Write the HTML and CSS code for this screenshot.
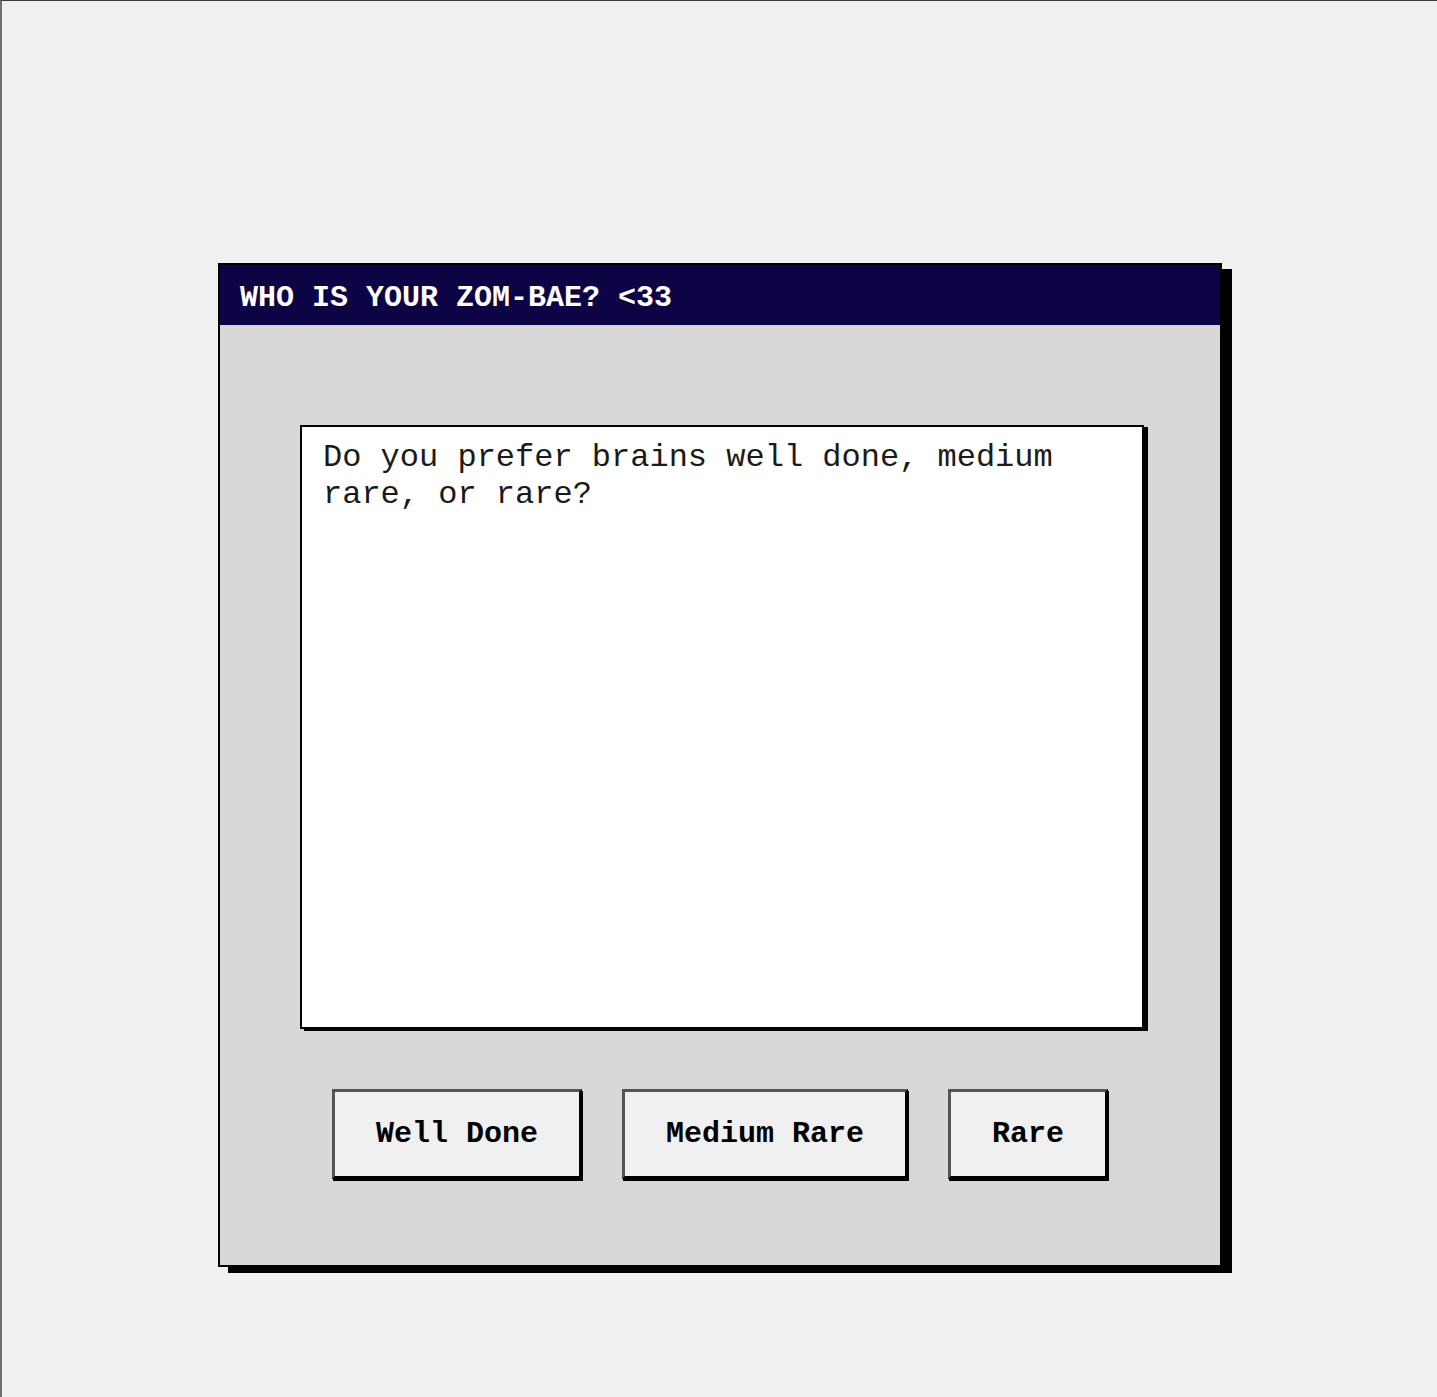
FILE: index.html
```html
<!DOCTYPE html>
<html>
<head>
<meta charset="utf-8">
<title>Zom-Bae</title>
<link rel="stylesheet" href="styles.css">
</head>
<body>
<div class="page">
  <div class="window">
    <div class="titlebar">WHO IS YOUR ZOM-BAE? &lt;33</div>
    <div class="content">
      <div class="textbox">Do you prefer brains well done, medium rare, or rare?</div>
      <div class="buttons">
        <button class="btn">Well Done</button>
        <button class="btn">Medium Rare</button>
        <button class="btn">Rare</button>
      </div>
    </div>
  </div>
</div>
</body>
</html>
```

FILE: styles.css
```css
html, body {
  margin: 0;
  padding: 0;
  background: #f0f0f0;
}
.page {
  box-sizing: border-box;
  min-height: 100vh;
  border-top: 1px solid #3c3c3c;
  border-left: 2px solid #6f6f6f;
  padding-top: 262px;
  display: flex;
  flex-direction: column;
  align-items: center;
  font-family: "Courier New", "Liberation Mono", monospace;
}
.window {
  width: 1000px;
  border: 2px solid #000;
  background: #d9d7d8;
  box-shadow: 10px 6px 0 #000;
  margin-left: 1px;
}
.titlebar {
  height: 60px;
  line-height: 66px;
  background: #0c0444;
  color: #fff;
  font-weight: bold;
  font-size: 30px;
  padding-left: 20px;
  overflow: hidden;
}
.content {
  padding: 100px 0 86px 0;
}
.textbox {
  box-sizing: border-box;
  margin-left: 80px;
  width: 844px;
  height: 604px;
  background: #fff;
  border: 2px solid #000;
  box-shadow: 4px 2px 0 #000;
  padding: 12px 21px;
  font-size: 32px;
  color: #1a1a1a;
}
.buttons {
  margin-top: 60px;
  display: flex;
  justify-content: center;
  gap: 40px;
}
.btn {
  font-family: "Courier New", "Liberation Mono", monospace;
  font-weight: bold;
  font-size: 30px;
  color: #000;
  background: #f0f0f0;
  border-style: solid;
  border-width: 3px;
  border-color: #555 #000 #000 #555;
  box-shadow: 1px 2px 0 #000;
  padding: 25px 41px;
  margin: 0;
  line-height: normal;
}
```
